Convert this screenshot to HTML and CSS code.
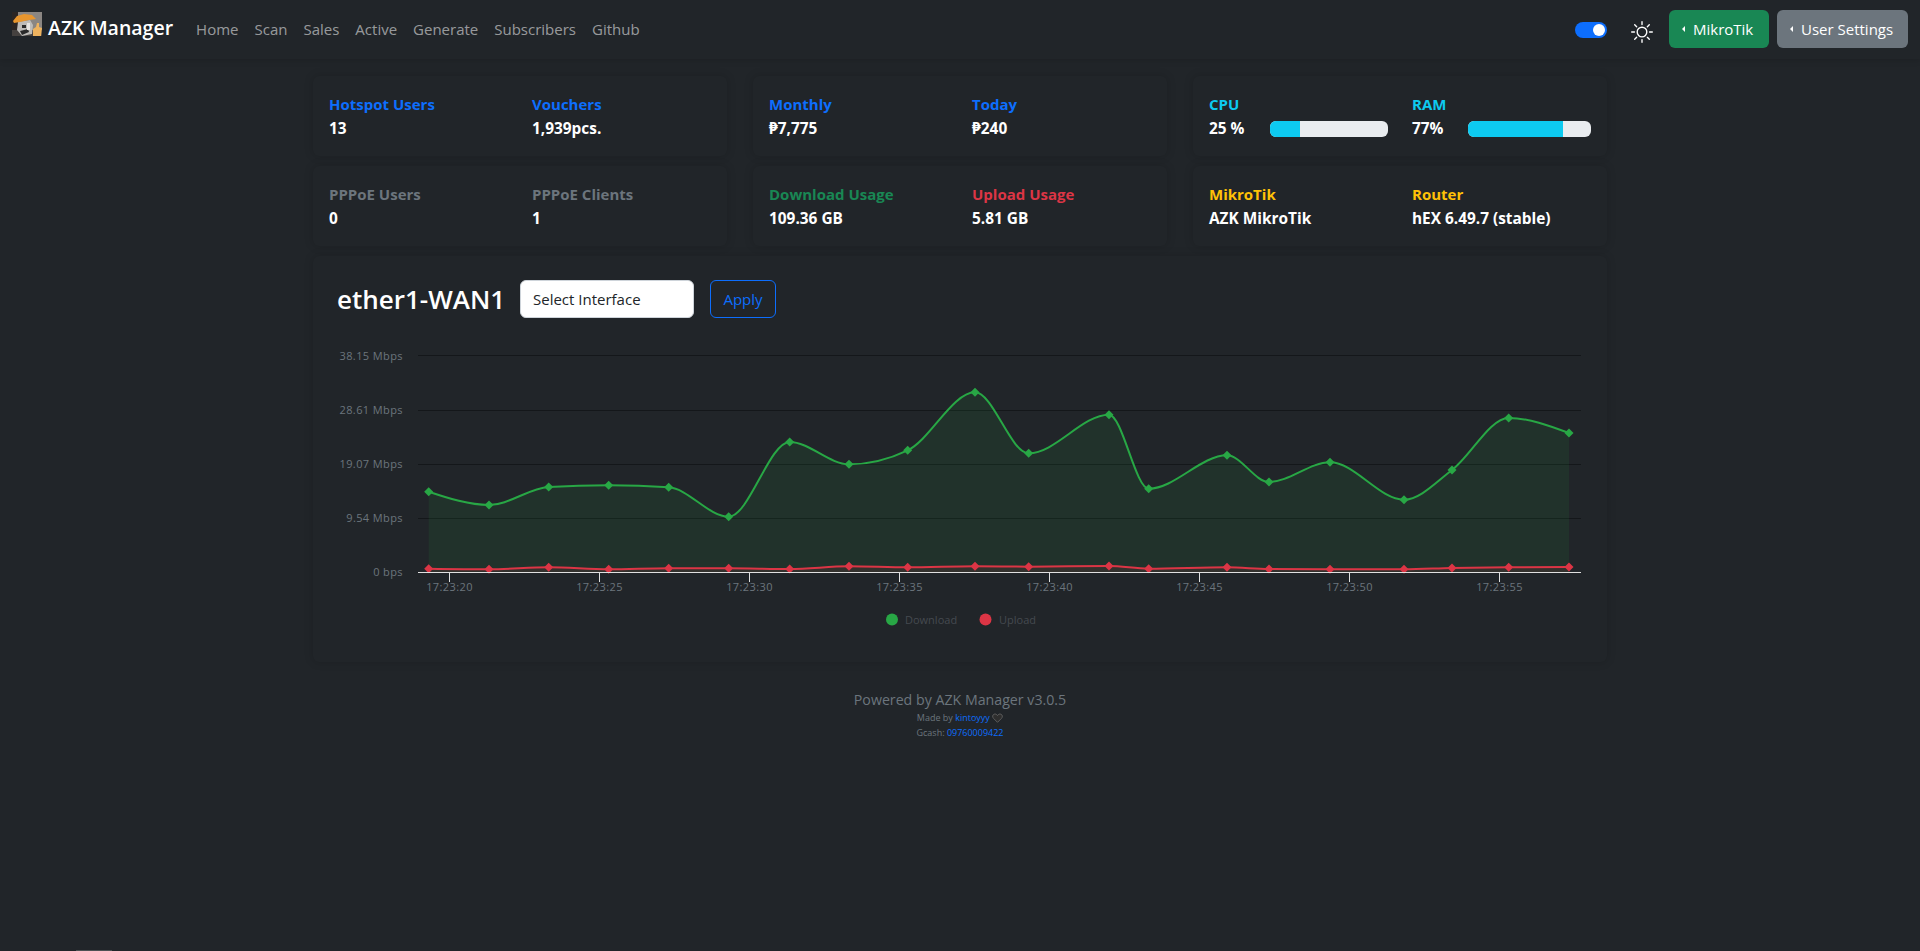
FILE: index.html
```html
<!DOCTYPE html>
<html lang="en">
<head>
<meta charset="utf-8">
<title>AZK Manager</title>
<link rel="stylesheet" href="styles.css">
</head>
<body>
<nav class="navbar">
  <a class="brand" href="#">
    <svg class="logo" viewBox="0 0 30 24" aria-hidden="true">
      <rect width="30" height="24" fill="#8b8682"/>
      <rect width="6" height="24" fill="#2b2523"/>
      <rect y="18" width="30" height="6" fill="#45413f"/>
      <path d="M6 10 18 8 21 13 20 22 10 24 5 18Z" fill="#bdbbb8"/>
      <path d="M10 13h4v3h-4zM8 19l8-2 1 3-7 3z" fill="#2a2a2a"/>
      <path d="M15 11h3v7h-3z" fill="#e6e4e1"/>
      <path d="M1 9 5 4 12 2 20 3 24 7 17 8 8 10 2 11Z" fill="#e8962e"/>
      <path d="M21 24V17L24 15 25 11 27 11 27 15 30 16 29 24Z" fill="#eeb35f"/>
    </svg>
    <span>AZK Manager</span>
  </a>
  <ul class="nav-links">
    <li><a href="#">Home</a></li>
    <li><a href="#">Scan</a></li>
    <li><a href="#">Sales</a></li>
    <li><a href="#">Active</a></li>
    <li><a href="#">Generate</a></li>
    <li><a href="#">Subscribers</a></li>
    <li><a href="#">Github</a></li>
  </ul>
  <div class="nav-right">
    <span class="switch"><span class="knob"></span></span>
    <svg class="sun" viewBox="0 0 16 16" fill="#fff" aria-hidden="true"><path d="M8 11a3 3 0 1 1 0-6 3 3 0 0 1 0 6zm0 1a4 4 0 1 0 0-8 4 4 0 0 0 0 8zM8 0a.5.5 0 0 1 .5.5v2a.5.5 0 0 1-1 0v-2A.5.5 0 0 1 8 0zm0 13a.5.5 0 0 1 .5.5v2a.5.5 0 0 1-1 0v-2A.5.5 0 0 1 8 13zm8-5a.5.5 0 0 1-.5.5h-2a.5.5 0 0 1 0-1h2a.5.5 0 0 1 .5.5zM3 8a.5.5 0 0 1-.5.5h-2a.5.5 0 0 1 0-1h2A.5.5 0 0 1 3 8zm10.657-5.657a.5.5 0 0 1 0 .707l-1.414 1.415a.5.5 0 1 1-.707-.708l1.414-1.414a.5.5 0 0 1 .707 0zm-9.193 9.193a.5.5 0 0 1 0 .707L3.05 13.657a.5.5 0 0 1-.707-.707l1.414-1.414a.5.5 0 0 1 .707 0zm9.193 2.121a.5.5 0 0 1-.707 0l-1.414-1.414a.5.5 0 0 1 .707-.707l1.414 1.414a.5.5 0 0 1 0 .707zM4.464 4.465a.5.5 0 0 1-.707 0L2.343 3.05a.5.5 0 1 1 .707-.707l1.414 1.414a.5.5 0 0 1 0 .708z"/></svg>
    <button class="btn btn-green"><i class="caret"></i>MikroTik</button>
    <button class="btn btn-gray"><i class="caret"></i>User Settings</button>
  </div>
</nav>

<main class="container">
  <section class="stats">
    <div class="card">
      <div class="pair"><h6 class="blue">Hotspot Users</h6><p>13</p></div>
      <div class="pair"><h6 class="blue">Vouchers</h6><p>1,939pcs.</p></div>
    </div>
    <div class="card">
      <div class="pair"><h6 class="blue">Monthly</h6><p>₱7,775</p></div>
      <div class="pair"><h6 class="blue">Today</h6><p>₱240</p></div>
    </div>
    <div class="card">
      <div class="pair"><h6 class="cyan">CPU</h6><div class="meter-row cpu-row"><p class="cpu-val">25 %</p><div class="meter"><span class="meter-fill" style="width:25%"></span></div></div></div>
      <div class="pair"><h6 class="cyan">RAM</h6><div class="meter-row"><p class="ram-val">77%</p><div class="meter"><span class="meter-fill" style="width:77%"></span></div></div></div>
    </div>
    <div class="card">
      <div class="pair"><h6 class="gray">PPPoE Users</h6><p>0</p></div>
      <div class="pair"><h6 class="gray">PPPoE Clients</h6><p>1</p></div>
    </div>
    <div class="card">
      <div class="pair"><h6 class="green">Download Usage</h6><p>109.36 GB</p></div>
      <div class="pair"><h6 class="red">Upload Usage</h6><p>5.81 GB</p></div>
    </div>
    <div class="card">
      <div class="pair"><h6 class="yellow">MikroTik</h6><p>AZK MikroTik</p></div>
      <div class="pair"><h6 class="yellow">Router</h6><p>hEX 6.49.7 (stable)</p></div>
    </div>
  </section>

  <section class="chart-card">
    <div class="chart-head">
      <h2>ether1-WAN1</h2>
      <div class="select">Select Interface</div>
      <button class="btn btn-outline">Apply</button>
    </div>
    <svg class="chart" id="chart" viewBox="313 330 1294 300" aria-label="Traffic chart">
      <g class="grid">
        <line x1="418" x2="1581" y1="355.5" y2="355.5"/>
        <line x1="418" x2="1581" y1="410.5" y2="410.5"/>
        <line x1="418" x2="1581" y1="464.5" y2="464.5"/>
        <line x1="418" x2="1581" y1="518.5" y2="518.5"/>
      </g>
      <g class="y-labels">
        <text x="403" y="360">38.15 Mbps</text>
        <text x="403" y="414">28.61 Mbps</text>
        <text x="403" y="468">19.07 Mbps</text>
        <text x="403" y="522">9.54 Mbps</text>
        <text x="403" y="576">0 bps</text>
      </g>
      <g id="series"></g>
      <g class="axis">
        <line x1="418" x2="1581" y1="572.5" y2="572.5"/>
        <line x1="449.5" x2="449.5" y1="572" y2="582"/>
        <line x1="599.5" x2="599.5" y1="572" y2="582"/>
        <line x1="749.5" x2="749.5" y1="572" y2="582"/>
        <line x1="899.5" x2="899.5" y1="572" y2="582"/>
        <line x1="1049.5" x2="1049.5" y1="572" y2="582"/>
        <line x1="1199.5" x2="1199.5" y1="572" y2="582"/>
        <line x1="1349.5" x2="1349.5" y1="572" y2="582"/>
        <line x1="1499.5" x2="1499.5" y1="572" y2="582"/>
      </g>
      <g class="x-labels">
        <text x="449.5" y="591">17:23:20</text>
        <text x="599.5" y="591">17:23:25</text>
        <text x="749.5" y="591">17:23:30</text>
        <text x="899.5" y="591">17:23:35</text>
        <text x="1049.5" y="591">17:23:40</text>
        <text x="1199.5" y="591">17:23:45</text>
        <text x="1349.5" y="591">17:23:50</text>
        <text x="1499.5" y="591">17:23:55</text>
      </g>
      <g class="legend">
        <circle cx="892" cy="619.5" r="6" fill="#28a745"/>
        <text x="905" y="624">Download</text>
        <circle cx="985.5" cy="619.5" r="6" fill="#dc3545"/>
        <text x="999" y="624">Upload</text>
      </g>
    </svg>
  </section>

  <footer class="footer">
    <p class="powered">Powered by AZK Manager v3.0.5</p>
    <p class="small">Made by <a href="#">kintoyyy</a> <svg class="heart" viewBox="0 0 16 15" aria-hidden="true"><path d="M8 14 2 8C0 6 .5 3 2.500 2 4.500 1 6.800 1.500 8 4 9.200 1.500 11.500 1 13.500 2 15.500 3 16 6 14 8Z" fill="#2e2e2e" stroke="#5c5c5c" stroke-width="1.500"/></svg></p>
    <p class="small">Gcash: <a href="#">09760009422</a></p>
  </footer>
</main>
<div class="scroll-hint"></div>
<script src="chart.js"></script>
</body>
</html>
```

FILE: styles.css
```css
* { box-sizing: border-box; }
html, body { margin: 0; padding: 0; }
body {
  min-height: 951px;
  overflow: hidden;
  background: #212529;
  color: #dee2e6;
  font-family: "Open Sans", "Noto Sans", "Liberation Sans", sans-serif;
  font-size: 15px;
}
a { text-decoration: none; }
p, h2, h6, ul { margin: 0; padding: 0; }

.navbar {
  display: flex;
  align-items: flex-start;
  height: 59px;
  padding: 12px 12px 0;
  background: #212529;
  box-shadow: 0 2px 6px rgba(0, 0, 0, .12);
}
.brand {
  display: flex;
  align-items: flex-start;
  gap: 6px;
  color: #fff;
  font-size: 19.5px;
  line-height: 24px;
  font-weight: 600;
}
.brand span { margin-top: 4px; }
.logo { width: 30px; height: 24px; display: block; }
.nav-links {
  display: flex;
  gap: 16px;
  margin-left: 23px;
  margin-top: 7px;
  line-height: 20px;
  list-style: none;
}
.nav-links a { color: rgba(255, 255, 255, .55); }
.nav-right { display: flex; align-items: center; margin-left: auto; margin-top: -2px; }
.switch {
  display: flex;
  justify-content: flex-end;
  align-items: center;
  width: 32px;
  height: 16px;
  padding: 2px;
  margin: 2px 24px 0 0;
  border-radius: 8px;
  background: #0d6efd;
}
.knob { width: 12px; height: 12px; border-radius: 50%; background: #fff; }
.sun { width: 22px; height: 22px; margin: 6px 16px 0 0; }
.btn {
  display: inline-flex;
  align-items: center;
  height: 38px;
  padding: 0 12px;
  border: 1px solid transparent;
  border-radius: 6px;
  color: #fff;
  font: inherit;
  white-space: nowrap;
}
.btn-green { width: 100px; margin-right: 8px; background: #198754; }
.btn-gray { width: 131px; background: #6c757d; }
.btn-outline { justify-content: center; width: 66px; color: #0d6efd; background: transparent; border-color: #0d6efd; }
.caret {
  flex: none;
  width: 0;
  height: 0;
  margin-right: 8px;
  border-top: 3.800px solid transparent;
  border-bottom: 3.800px solid transparent;
  border-right: 3.500px solid #fff;
}

.container { width: 1320px; margin: 0 auto; padding: 17px 13px 0; }
.stats {
  display: grid;
  grid-template-columns: repeat(3, 414px);
  column-gap: 26px;
  row-gap: 10px;
}
.card, .chart-card {
  background: #212529;
  border-radius: 6px;
  box-shadow: 0 0 10px rgba(0, 0, 0, .16);
}
.card {
  display: grid;
  grid-template-columns: 203px 1fr;
  height: 80px;
  padding: 18px 16px 0;
}
.pair { min-width: 0; }
.pair h6 { font-size: 15px; line-height: 20px; font-weight: 700; }
.pair p { margin-top: 5px; color: #fff; font-size: 15.4px; line-height: 20px; font-weight: 700; }
.blue { color: #0d6efd; }
.cyan { color: #0dcaf0; }
.gray { color: #6c757d; }
.green { color: #198754; }
.red { color: #dc3545; }
.yellow { color: #ffc107; }
.meter-row { display: flex; align-items: flex-start; margin-top: 5px; }
.cpu-row { margin-right: 24px; }
.pair .meter-row p { margin-top: 0; }
.cpu-val { flex: 0 0 61px; }
.ram-val { flex: 0 0 56px; }
.meter {
  flex: 1;
  height: 16px;
  margin-top: 2px;
  overflow: hidden;
  border-radius: 6px;
  background: #e9ecef;
}
.meter-fill { display: block; height: 100%; background: #0dcaf0; }

.chart-card { height: 406px; margin-top: 10px; padding-top: 24px; }
.chart-head { display: flex; align-items: center; height: 38px; padding-left: 24px; }
.chart-head h2 { width: 183px; color: #fff; font-size: 26px; font-weight: 600; }
.select {
  display: flex;
  align-items: center;
  width: 174px;
  height: 38px;
  margin-right: 16px;
  padding-left: 12px;
  border: 1px solid #ced4da;
  border-radius: 6px;
  background: #fff;
  color: #212529;
}
.chart { display: block; width: 1294px; height: 300px; margin-top: 12px; }
.grid line { stroke: #14171a; stroke-width: 1; }
.axis line { stroke: #e0e0e0; stroke-width: 1; }
.y-labels text, .x-labels text, .legend text {
  font-family: "Open Sans", "Liberation Sans", sans-serif;
  font-size: 11px;
  letter-spacing: .4px;
  fill: #6c757d;
}
.y-labels text { text-anchor: end; }
.x-labels text { text-anchor: middle; }
.legend text { letter-spacing: 0; fill: #454a50; }
.line { fill: none; stroke-width: 2; }

.footer { margin-top: 28px; text-align: center; color: #6c757d; }
.powered { font-size: 14.2px; line-height: 20px; }
.small { font-size: 9px; line-height: 15px; }
.small a { color: #0d6efd; }
.heart { width: 11px; height: 10px; vertical-align: -2px; }

.scroll-hint {
  position: fixed;
  left: 76px;
  bottom: 0;
  width: 36px;
  height: 1px;
  background: #4d5154;
}
```

FILE: chart.js
```js
const xs = [428.7, 489, 548.7, 608.7, 668.7, 728.7, 789.7, 849, 907.7, 975, 1028.7, 1109, 1148.7, 1227, 1269, 1330, 1404, 1452, 1508.7, 1569];
const down = [491.7, 505, 487, 485.3, 487.3, 516.7, 442, 464.3, 450.3, 392.3, 453.3, 414.7, 488.7, 455.3, 482, 462.3, 499.7, 470, 418, 433];
const up = [568.7, 569.3, 567.3, 569.3, 568.3, 568.3, 569, 566.3, 567.3, 566.3, 566.7, 566, 568.7, 567.3, 569, 569.3, 569.3, 568, 567.3, 567];
const baseline = 572;
const NS = "http://www.w3.org/2000/svg";

function sign(v) { return v < 0 ? -1 : 1; }

function tangents(x, y) {
  const n = x.length, t = new Array(n);
  for (let i = 1; i < n - 1; i++) {
    const h0 = x[i] - x[i - 1], h1 = x[i + 1] - x[i];
    const s0 = (y[i] - y[i - 1]) / h0, s1 = (y[i + 1] - y[i]) / h1;
    const p = (s0 * h1 + s1 * h0) / (h0 + h1);
    t[i] = (sign(s0) + sign(s1)) * Math.min(Math.abs(s0), Math.abs(s1), 0.5 * Math.abs(p)) || 0;
  }
  const end = (a, b, m) => (3 * (y[b] - y[a]) / (x[b] - x[a]) - m) / 2;
  t[0] = end(0, 1, t[1]);
  t[n - 1] = end(n - 2, n - 1, t[n - 2]);
  return t;
}

function curve(x, y) {
  const t = tangents(x, y);
  let d = `M${x[0]} ${y[0]}`;
  for (let i = 0; i < x.length - 1; i++) {
    const h = (x[i + 1] - x[i]) / 3;
    d += `C${x[i] + h} ${y[i] + t[i] * h} ${x[i + 1] - h} ${y[i + 1] - t[i + 1] * h} ${x[i + 1]} ${y[i + 1]}`;
  }
  return d;
}

function add(parent, tag, attrs) {
  const el = document.createElementNS(NS, tag);
  for (const k in attrs) el.setAttribute(k, attrs[k]);
  parent.appendChild(el);
  return el;
}

function draw(y, color, fillOpacity) {
  const g = document.getElementById("series");
  const d = curve(xs, y);
  add(g, "path", { d: `${d}L${xs[xs.length - 1]} ${baseline}L${xs[0]} ${baseline}Z`, fill: color, "fill-opacity": fillOpacity });
  add(g, "path", { d, class: "line", stroke: color });
  xs.forEach((x, i) => {
    const r = 4.5;
    add(g, "path", { d: `M${x} ${y[i] - r}L${x + r} ${y[i]}L${x} ${y[i] + r}L${x - r} ${y[i]}Z`, fill: color });
  });
}

draw(down, "#28a745", 0.1);
draw(up, "#dc3545", 0.1);
```
